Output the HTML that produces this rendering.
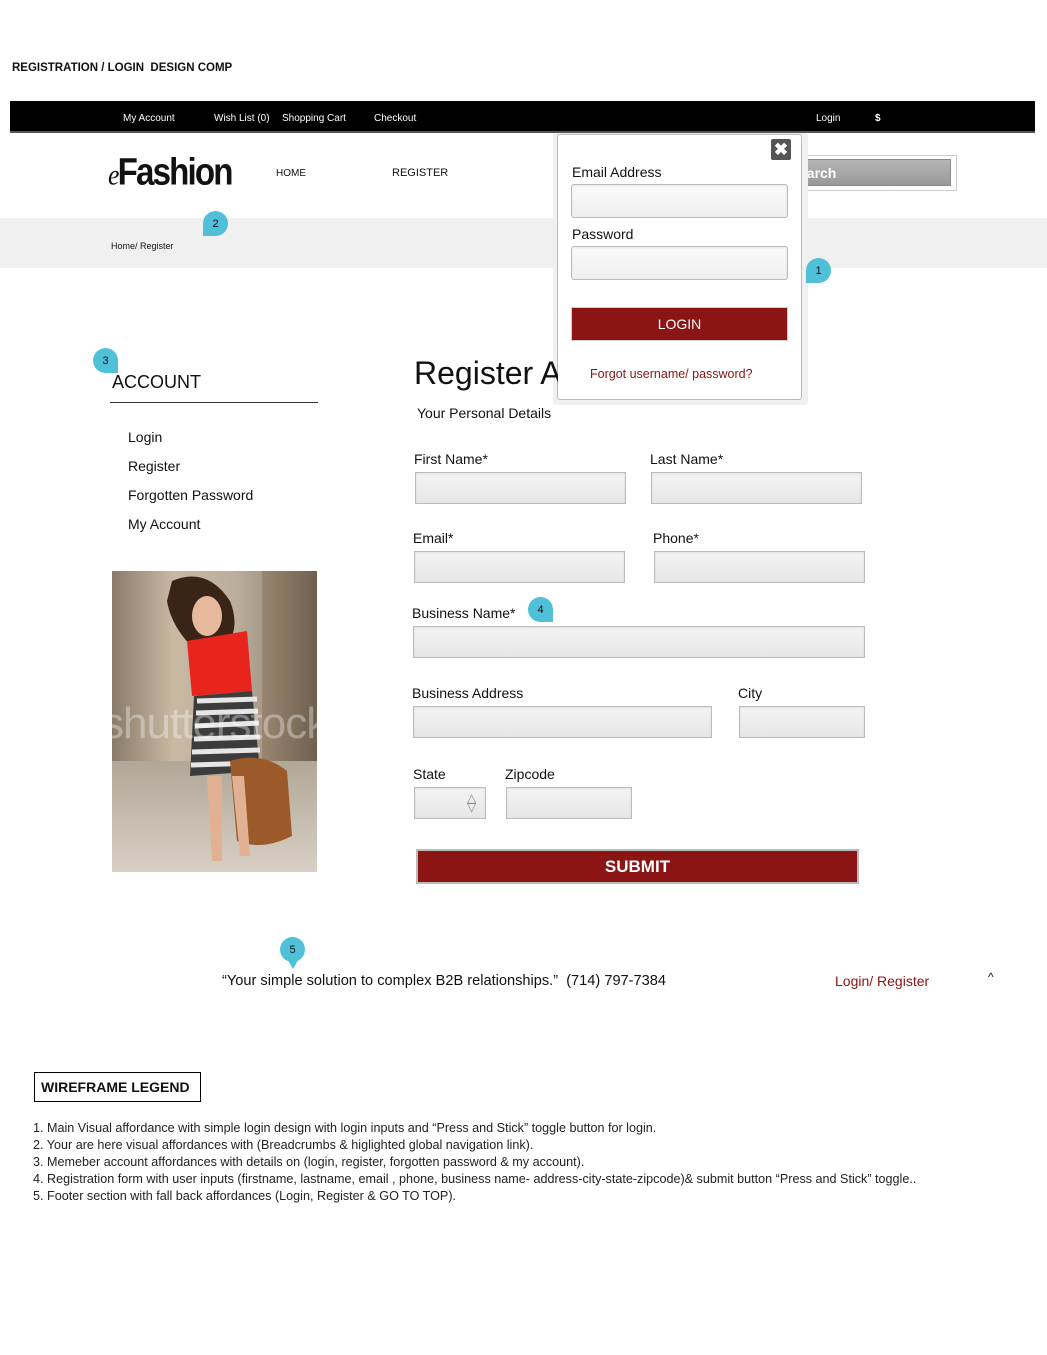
<!DOCTYPE html>
<html><head><meta charset="utf-8">
<style>
*{margin:0;padding:0;box-sizing:border-box}
body{width:1047px;height:1355px;background:#fff;position:relative;font-family:"Liberation Sans",sans-serif;color:#111;overflow:hidden}
.a{position:absolute}
.inp{position:absolute;border:1px solid #bbb;background:linear-gradient(#f4f4f4,#e6e6e6);box-shadow:inset 0 1px 2px rgba(0,0,0,.08)}
.lbl{position:absolute;font-size:14px;color:#111}
.pin{position:absolute;width:25px;height:25px;background:#4fc0d8;font-size:11px;display:flex;align-items:center;justify-content:center;color:#111}
.pin span{display:block}
</style></head><body>
<div class="a" style="left:12px;top:62px;font-size:11.5px;font-weight:bold">REGISTRATION / LOGIN&nbsp; DESIGN COMP</div>

<div class="a" style="left:10px;top:101px;width:1025px;height:32px;background:#000;border-bottom:2px solid #555"></div>
<div class="a" style="left:123px;top:113px;font-size:10px;color:#fff">My Account</div>
<div class="a" style="left:214px;top:113px;font-size:10px;color:#fff">Wish List (0)</div>
<div class="a" style="left:282px;top:113px;font-size:10px;color:#fff">Shopping Cart</div>
<div class="a" style="left:374px;top:113px;font-size:10px;color:#fff">Checkout</div>
<div class="a" style="left:816px;top:113px;font-size:10px;color:#fff">Login</div>
<div class="a" style="left:875px;top:113px;font-size:10px;color:#fff;font-weight:bold">$</div>

<div class="a" style="left:108px;top:150px;font-size:36px;letter-spacing:-2px;font-weight:bold;transform:scale(.92,1.05);transform-origin:left top"><i style="font-weight:normal;font-family:'Liberation Serif',serif;font-size:28px">e</i>Fashion</div>
<div class="a" style="left:276px;top:168px;font-size:10px">HOME</div>
<div class="a" style="left:392px;top:167px;font-size:11px">REGISTER</div>

<div class="a" style="left:795px;top:155px;width:162px;height:36px;border:1px solid #ccc;background:#fff"></div>
<div class="a" style="left:796px;top:159px;width:155px;height:27px;background:linear-gradient(#b5b5b5,#999);border:1px solid #888;color:#fff;font-size:14px;font-weight:bold;padding:5px 0 0 2px">earch</div>

<div class="a" style="left:0;top:218px;width:1047px;height:50px;background:#f0f0f0"></div>
<div class="a" style="left:111px;top:241px;font-size:9px">Home/ Register</div>

<!-- popup -->
<div class="a" style="left:553px;top:133px;width:255px;height:272px;background:#f0f0f0;border-radius:3px"></div>
<div class="a" style="left:557px;top:134px;width:245px;height:266px;background:#fff;border:1px solid #bbb;border-radius:3px"></div>
<div class="a" style="left:771px;top:139px;width:20px;height:21px;background:#555;border-radius:2px;color:#fff;font-weight:bold;font-size:17px;text-align:center;line-height:21px">✖</div>
<div class="lbl" style="left:572px;top:164px;font-size:14px">Email Address</div>
<div class="inp" style="left:571px;top:184px;width:217px;height:34px;border-radius:3px;background:linear-gradient(#fafafa,#efefef)"></div>
<div class="lbl" style="left:572px;top:226px;font-size:14px">Password</div>
<div class="inp" style="left:571px;top:246px;width:217px;height:34px;border-radius:3px;background:linear-gradient(#fafafa,#efefef)"></div>
<div class="a" style="left:571px;top:307px;width:217px;height:34px;border:1px solid #ccc;background:#8b1414;color:#fff;font-size:14px;text-align:center;line-height:32px">LOGIN</div>
<div class="a" style="left:590px;top:367px;font-size:12.5px;color:#8b1414">Forgot username/ password?</div>

<!-- pins -->
<div class="pin" style="left:806px;top:258px;border-radius:50% 50% 50% 0"><span>1</span></div>
<div class="pin" style="left:203px;top:211px;border-radius:50% 50% 50% 0"><span>2</span></div>
<div class="pin" style="left:93px;top:348px;border-radius:50% 50% 0 50%"><span>3</span></div>
<div class="pin" style="left:528px;top:597px;border-radius:50% 50% 0 50%"><span>4</span></div>
<div class="pin" style="left:280px;top:937px;border-radius:50% 50% 50% 50%"><span>5</span></div>
<div class="a" style="left:285px;top:955px;width:0;height:0;border-left:8px solid transparent;border-right:8px solid transparent;border-top:14px solid #4fc0d8"></div>

<!-- sidebar -->
<div class="a" style="left:112px;top:372px;font-size:18px">ACCOUNT</div>
<div class="a" style="left:110px;top:402px;width:208px;height:1px;background:#333"></div>
<div class="a" style="left:128px;top:429px;font-size:14px">Login</div>
<div class="a" style="left:128px;top:458px;font-size:14px">Register</div>
<div class="a" style="left:128px;top:487px;font-size:14px">Forgotten Password</div>
<div class="a" style="left:128px;top:516px;font-size:14px">My Account</div>
<div class="a" style="left:112px;top:571px;width:205px;height:301px;overflow:hidden;background:linear-gradient(90deg,#8a7a6a,#c9b9a3 30%,#bcae9c 60%,#7c7468);">
 <div class="a" style="left:0;top:190px;width:205px;height:111px;background:linear-gradient(#b0a798,#d8d0c4)"></div>
 <div class="a" style="left:150px;top:0;width:55px;height:190px;background:linear-gradient(90deg,#9a8670,#6f604f)"></div>
 <svg class="a" style="left:0;top:0" width="205" height="301">
  <path d="M60 10 Q95 -5 118 30 Q130 60 110 80 L90 85 Q60 60 55 30Z" fill="#3a2418"/>
  <ellipse cx="95" cy="45" rx="15" ry="20" fill="#e6b99c"/>
  <path d="M75 70 L135 60 L140 120 L80 125Z" fill="#e8241c"/>
  <path d="M82 125 L140 120 L148 200 L78 205Z" fill="#3c3c3c"/>
  <path d="M85 130 L145 128 M84 142 L146 140 M83 155 L147 152 M82 168 L148 166 M80 181 L148 179 M79 194 L148 192" stroke="#e6e6e6" stroke-width="5"/>
  <path d="M118 190 Q150 180 175 200 L180 265 Q150 280 125 270Z" fill="#9c5a2a"/>
  <path d="M95 205 L100 290 L110 290 L110 205Z M120 205 L128 285 L138 285 L132 205Z" fill="#e2b193"/>
 </svg>
 <div class="a" style="left:-10px;top:128px;font-size:44px;color:rgba(255,255,255,.35);letter-spacing:-1px">shutterstock</div>
</div>

<!-- form -->
<div class="a" style="left:414px;top:355px;font-size:32px;width:144px;overflow:hidden;white-space:nowrap">Register Acc</div>
<div class="a" style="left:417px;top:405px;font-size:14px">Your Personal Details</div>
<div class="lbl" style="left:414px;top:451px">First Name*</div>
<div class="lbl" style="left:650px;top:451px">Last Name*</div>
<div class="inp" style="left:415px;top:472px;width:211px;height:32px"></div>
<div class="inp" style="left:651px;top:472px;width:211px;height:32px"></div>
<div class="lbl" style="left:413px;top:530px">Email*</div>
<div class="lbl" style="left:653px;top:530px">Phone*</div>
<div class="inp" style="left:414px;top:551px;width:211px;height:32px"></div>
<div class="inp" style="left:654px;top:551px;width:211px;height:32px"></div>
<div class="lbl" style="left:412px;top:605px">Business Name*</div>
<div class="inp" style="left:413px;top:626px;width:452px;height:32px"></div>
<div class="lbl" style="left:412px;top:685px">Business Address</div>
<div class="lbl" style="left:738px;top:685px">City</div>
<div class="inp" style="left:413px;top:706px;width:299px;height:32px"></div>
<div class="inp" style="left:739px;top:706px;width:126px;height:32px"></div>
<div class="lbl" style="left:413px;top:766px">State</div>
<div class="lbl" style="left:505px;top:766px">Zipcode</div>
<div class="inp" style="left:414px;top:787px;width:72px;height:32px"><div class="a" style="left:52px;top:6px;font-size:12px;color:#888;line-height:9px">△<br>▽</div></div>
<div class="inp" style="left:506px;top:787px;width:126px;height:32px"></div>
<div class="a" style="left:416px;top:849px;width:443px;height:35px;border:2px solid #bbb;background:#8b1414;color:#fff;font-weight:bold;font-size:17px;text-align:center;line-height:31px">SUBMIT</div>

<!-- footer -->
<div class="a" style="left:222px;top:973px;font-size:14.6px">“Your simple solution to complex B2B relationships.”&nbsp; (714) 797-7384</div>
<div class="a" style="left:835px;top:973px;font-size:14px;color:#8b1414">Login/ Register</div>
<div class="a" style="left:988px;top:970px;font-size:12px">^</div>

<div class="a" style="left:34px;top:1072px;width:167px;height:30px;border:1px solid #000;font-weight:bold;font-size:14px;padding:6px 0 0 6px">WIREFRAME LEGEND</div>
<div class="a" style="left:33px;top:1120px;font-size:12.6px;line-height:17px;color:#222">
1. Main Visual affordance with simple login design with login inputs and “Press and Stick” toggle button for login.<br>
2. Your are here visual affordances with (Breadcrumbs &amp; higlighted global navigation link).<br>
3. Memeber account affordances with details on (login, register, forgotten password &amp; my account).<br>
4. Registration form with user inputs (firstname, lastname, email , phone, business name- address-city-state-zipcode)&amp; submit button “Press and Stick” toggle..<br>
5. Footer section with fall back affordances (Login, Register &amp; GO TO TOP).
</div>
</body></html>
